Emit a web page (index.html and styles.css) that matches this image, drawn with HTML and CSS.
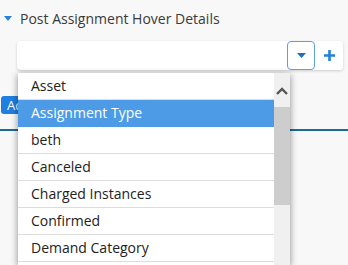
FILE: index.html
```html
<!DOCTYPE html>
<html lang="en">
<head>
    <meta charset="UTF-8">
    <meta name="viewport" content="width=device-width, initial-scale=1.0">
    <title>Post Assignment Hover Details</title>
    <link rel="stylesheet" href="styles.css">
</head>
<body>
    <div class="section">
        <div class="section-header">
            <svg class="caret" width="8" height="5" viewBox="0 0 8 5"><path d="M0 0H8L4 5Z" fill="#2a7fd8"/></svg>
            <span class="title">Post Assignment Hover Details</span>
        </div>
        <div class="field">
            <div class="field-input"></div>
            <button class="btn-toggle">
                <svg width="9" height="5" viewBox="0 0 9 5"><path d="M0 0H9L4.5 5Z" fill="#1f6cc4"/></svg>
            </button>
            <button class="btn-add">
                <svg width="13" height="13" viewBox="0 0 13 13"><path d="M6.5 1V12M1 6.5H12" stroke="#2480dc" stroke-width="2.6"/></svg>
            </button>
            <div class="dropdown">
                <ul class="options">
                    <li>Asset</li>
                    <li class="selected">Assignment Type</li>
                    <li>beth</li>
                    <li>Canceled</li>
                    <li>Charged Instances</li>
                    <li>Confirmed</li>
                    <li>Demand Category</li>
                </ul>
                <div class="scrollbar">
                    <div class="scroll-up">
                        <svg width="12" height="8" viewBox="0 0 12 8"><path d="M1 7L6 2L11 7" fill="none" stroke="#555" stroke-width="2.4"/></svg>
                    </div>
                    <div class="scroll-thumb"></div>
                </div>
            </div>
        </div>
        <div class="toolbar">
            <span class="badge">Add</span>
        </div>
        <div class="divider"></div>
    </div>
</body>
</html>
```

FILE: styles.css
```css
html,
body {
    height: 100%;
}
body {
    margin: 0;
    background: #f8f8f8;
    font-family: "Open Sans", sans-serif;
    color: #333;
}
.section-header {
    display: flex;
    align-items: center;
    padding: 9px 0 0 4px;
    line-height: 19px;
}
.caret {
    margin-right: 8px;
}
.title {
    font-size: 14px;
    color: #3a3a3a;
}
.field {
    position: relative;
    display: flex;
    margin: 13px 0 0 17px;
    width: 326px;
    height: 29px;
    background: #fff;
    border-radius: 4px;
    box-shadow: 0 1px 3px rgba(0, 0, 0, 0.18);
}
.field-input {
    flex: 1;
}
.btn-toggle,
.btn-add {
    width: 28px;
    height: 29px;
    padding: 0;
    border: none;
    background: #fff;
    display: flex;
    align-items: center;
    justify-content: center;
    cursor: pointer;
}
.btn-toggle {
    border: 1px solid #5c9fe6;
    border-radius: 4px;
}
.btn-add {
    border-radius: 0 4px 4px 0;
}
.dropdown {
    position: absolute;
    left: 1px;
    top: 32px;
    width: 272px;
    height: 192px;
    display: flex;
    background: #fff;
    box-shadow: 0 2px 7px rgba(0, 0, 0, 0.45);
    z-index: 2;
}
.options {
    flex: 1;
    list-style: none;
    margin: 0;
    padding: 0;
    overflow: hidden;
}
.options li {
    height: 26px;
    line-height: 26px;
    padding-left: 13px;
    font-size: 14px;
    color: #222;
    border-bottom: 1px solid #ddd;
}
.options li.selected {
    background: #4d9be6;
    color: #fff;
    border-bottom-color: #4d9be6;
}
.scrollbar {
    width: 16px;
    background: #f0f0f0;
    display: flex;
    flex-direction: column;
}
.scroll-up {
    height: 34px;
    display: flex;
    align-items: center;
    justify-content: center;
    padding-top: 2px;
    box-sizing: border-box;
}
.scroll-thumb {
    height: 98px;
    background: #cdcdcd;
}
.toolbar {
    display: flex;
    margin-top: 26px;
    height: 18px;
}
.badge {
    background: #1f7fe0;
    color: #fff;
    font-size: 13px;
    line-height: 18px;
    padding: 0 8px 0 6px;
    border-radius: 3px;
    margin-left: 1px;
}
.divider {
    margin-top: 15px;
    height: 2px;
    background: #1b6c95;
}
```
